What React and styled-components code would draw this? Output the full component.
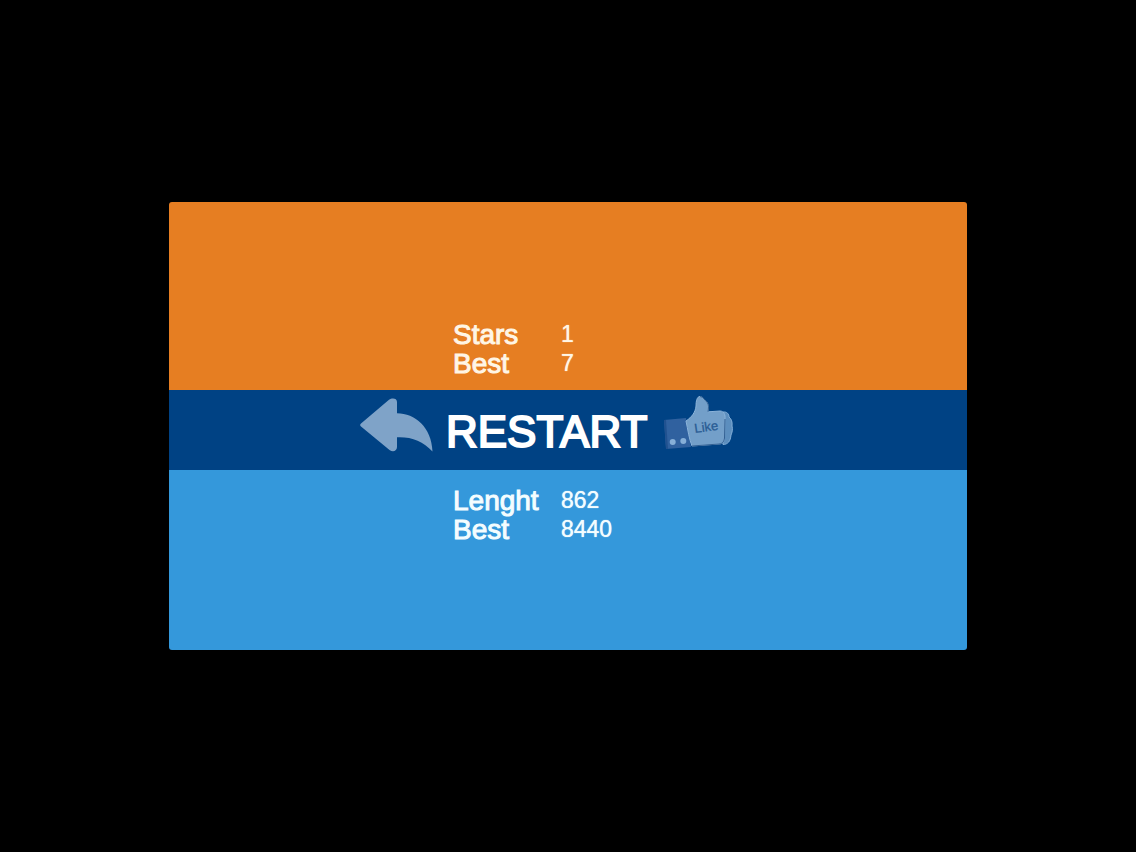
import React from "react"
import styled, { createGlobalStyle } from "styled-components"

const App = () => (
  <Page>
    <GlobalStyle />
    <Game>
      <StarsPanel>
        <Content>
          <Scores rows={[["Stars", 1], ["Best", 7]]} />
        </Content>
      </StarsPanel>
      <ActionBar>
        <Content>
          <Actions>
            <RestartButton type="button">
              <ArrowIcon />
              <RestartLabel>RESTART</RestartLabel>
            </RestartButton>
            <LikeButton type="button" aria-label="Like">
              <LikeIcon />
            </LikeButton>
          </Actions>
        </Content>
      </ActionBar>
      <LengthPanel>
        <Content>
          <Scores rows={[["Lenght", 862], ["Best", 8440]]} />
        </Content>
      </LengthPanel>
    </Game>
  </Page>
)

export default App

const Scores = ({ rows }) => (
  <ScoreTable>
    <tbody>
      {rows.map(([label, value]) => (
        <tr key={label}>
          <ScoreLabel scope="row">{label}</ScoreLabel>
          <ScoreValue>{value}</ScoreValue>
        </tr>
      ))}
    </tbody>
  </ScoreTable>
)

const ArrowIcon = () => (
  <svg width="74" height="55" viewBox="0 0 74 55" aria-hidden="true">
    <path
      fill="#7fa3c8"
      d="M1 25.5 L29 1.8 C32 -.5 37 0 37 4 V15.3 C55 15.5 71.5 29 72.5 53.5 C63 43 51 38.5 37 39.2 V49 C37 53 33 54.5 29.5 52 L1 28.5 Q-.7 27 1 25.5Z"
    />
  </svg>
)

const LikeIcon = () => (
  <svg width="72" height="60" viewBox="0 0 72 60" aria-hidden="true">
    <path fill="#30619f" d="M1 25 L23 23 L28 52 L3 54Z" />
    <path fill="#20518f" d="M1 25 L3 54 L5 54 L3 25Z" />
    <circle cx="9.7" cy="47" r="3" fill="#86afd8" />
    <circle cx="20.3" cy="46" r="3" fill="#86afd8" />
    <path
      fill="#5c8ebe"
      stroke="#84afd8"
      d="M60 17 C64 16.5 66 19 66 22 C68.5 24 69.5 27 69 31 C70 34 69 38 68 40 C67.5 46 65 49.5 60 49.5Z"
    />
    <path
      fill="#739fc9"
      stroke="#8bb3da"
      d="M23 26 C29 22 32.5 17 33 11 C33 6 34 1.5 37 1.5 C40 2 41 5 44 7 C45.500 10 45.5 13 45 16.8 L57 16 C61 16 62.5 20 62 24 L61.5 43 C61 47 60 48.8 56 49 L29 51 C26 44 25 35 23 26Z"
    />
    <path
      fill="none"
      stroke="#315f92"
      d="M37 1.500 C41 2 41 5 44 7 C46 10 45.500 13 45 16.800 M29 51 L56 49 C60 48.800 61 46 61.500 43 L62 24"
    />
    <text
      x="32"
      y="38"
      transform="rotate(-8 32 38)"
      fill="#2a5c94"
      stroke="#2a5c94"
      strokeWidth=".3"
      fontFamily="Liberation Sans, Arial, sans-serif"
      fontSize="13"
    >
      Like
    </text>
  </svg>
)

const GlobalStyle = createGlobalStyle`
  body {
    margin: 0;
    background: #000;
    font-family: "Liberation Sans", Arial, sans-serif;
  }
`

const Page = styled.main`
  display: flex;
  align-items: center;
  box-sizing: border-box;
  min-height: 100vh;
  padding: 0 169px;
`

const Game = styled.div`
  width: 100%;
  border-radius: 3px;
  overflow: hidden;
  color: #fff;
`

const Panel = styled.section`
  display: flex;
  justify-content: center;
  box-sizing: border-box;
`

const StarsPanel = styled(Panel)`
  align-items: flex-end;
  min-height: 188px;
  padding-bottom: 12px;
  background: #e67e22;
  color: #fff6e6;
`

const ActionBar = styled(Panel)`
  min-height: 80px;
  align-items: center;
  background: #004284;
`

const LengthPanel = styled(Panel)`
  align-items: flex-start;
  min-height: 180px;
  padding-top: 16px;
  background: #3498db;
  color: #f4fdff;
`

const Content = styled.div`
  width: 416px;
`

const ScoreTable = styled.table`
  margin-left: 93px;
  border-collapse: collapse;
  th,
  td {
    padding: 0;
    line-height: 29px;
    text-align: left;
    vertical-align: middle;
  }
`

const ScoreLabel = styled.th`
  width: 108px;
  font-size: 28px;
  font-weight: normal;
  -webkit-text-stroke: 1px currentColor;
`

const ScoreValue = styled.td`
  font-size: 23px;
  text-shadow: 0 0 1px currentColor;
`

const Actions = styled.div`
  display: flex;
  align-items: center;
  gap: 16px;
  padding-bottom: 10px;
`

const Button = styled.button`
  display: flex;
  align-items: center;
  padding: 0;
  border: 0;
  background: none;
  color: inherit;
  font-family: inherit;
  cursor: pointer;
`

const RestartButton = styled(Button)`
  gap: 12px;
`

const RestartLabel = styled.span`
  padding-top: 14px;
  font-size: 44px;
  line-height: 50px;
  -webkit-text-stroke: 2px currentColor;
`

const LikeButton = styled(Button)`
  flex-shrink: 0;
`
